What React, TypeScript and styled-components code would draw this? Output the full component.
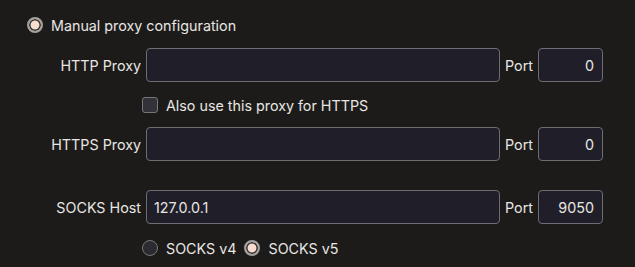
import React from 'react';
import styled, { createGlobalStyle, css } from 'styled-components';

const GlobalStyle = createGlobalStyle`
  html, body {
    margin: 0;
    background: #1c1b1a;
    color: #e8e6e3;
    font-family: Inter, "Noto Sans", sans-serif;
    font-size: 14.3px;
  }
`;

const Page = styled.div`
  display: flex;
  flex-direction: column;
  padding: 15px 0 0 27px;
  width: 635px;
  height: 267px;
  box-sizing: border-box;
`;

const Option = styled.label`
  display: flex;
  align-items: center;
  gap: 8px;
  height: 20px;
  white-space: nowrap;
`;

const Radio = styled.span<{ checked?: boolean }>`
  width: 16px;
  height: 16px;
  border-radius: 50%;
  box-sizing: border-box;
  flex-shrink: 0;
  border: 1.5px solid #77767a;
  background: #2c2b31;
  ${({ checked }) =>
    checked &&
    css`
      border: 2px solid #a3a1a0;
      background: #f6ddcd;
      box-shadow: inset 0 0 0 1.5px #2a2928;
    `}
`;

const Box = styled.span`
  width: 16px;
  height: 16px;
  border-radius: 3px;
  box-sizing: border-box;
  flex-shrink: 0;
  border: 1.5px solid #77767a;
  background: #333238;
`;

const Row = styled.div<{ top: number }>`
  display: flex;
  align-items: center;
  margin-top: ${({ top }) => top}px;
`;

const Label = styled.span`
  width: 114px;
  text-align: right;
  margin-right: 5px;
  white-space: nowrap;
`;

const Indent = styled.div`
  width: 115px;
`;

const Field = styled.div<{ port?: boolean }>`
  box-sizing: border-box;
  height: 34px;
  width: ${({ port }) => (port ? 65 : 354)}px;
  border: 1px solid #6e6d72;
  border-radius: 4px;
  background: #201f29;
  padding: 0 7px;
  display: flex;
  align-items: center;
  justify-content: ${({ port }) => (port ? 'flex-end' : 'flex-start')};
  ${({ port }) => port && css`padding-right: 8px;`}
`;

const PortLabel = styled.span`
  margin: 0 5px 0 5px;
`;

const Group = styled.div`
  display: flex;
  gap: 8px;
`;

const fields = [
  { label: 'HTTP Proxy', value: '', port: '0' },
  { label: 'HTTPS Proxy', value: '', port: '0' },
  { label: 'SOCKS Host', value: '127.0.0.1', port: '9050' },
];

function FieldRow({ top, f }: { top: number; f: (typeof fields)[number] }) {
  return (
    <Row top={top}>
      <Label>{f.label}</Label>
      <Field>{f.value}</Field>
      <PortLabel>Port</PortLabel>
      <Field port>{f.port}</Field>
    </Row>
  );
}

export default function App() {
  return (
    <>
      <GlobalStyle />
      <Page>
        <Option>
          <Radio checked />
          Manual proxy configuration
        </Option>
        <FieldRow top={13} f={fields[0]} />
        <Row top={13}>
          <Indent />
          <Option>
            <Box />
            Also use this proxy for HTTPS
          </Option>
        </Row>
        <FieldRow top={12} f={fields[1]} />
        <FieldRow top={29} f={fields[2]} />
        <Row top={14}>
          <Indent />
          <Group>
            <Option>
              <Radio />
              SOCKS v4
            </Option>
            <Option>
              <Radio checked />
              SOCKS v5
            </Option>
          </Group>
        </Row>
      </Page>
    </>
  );
}
